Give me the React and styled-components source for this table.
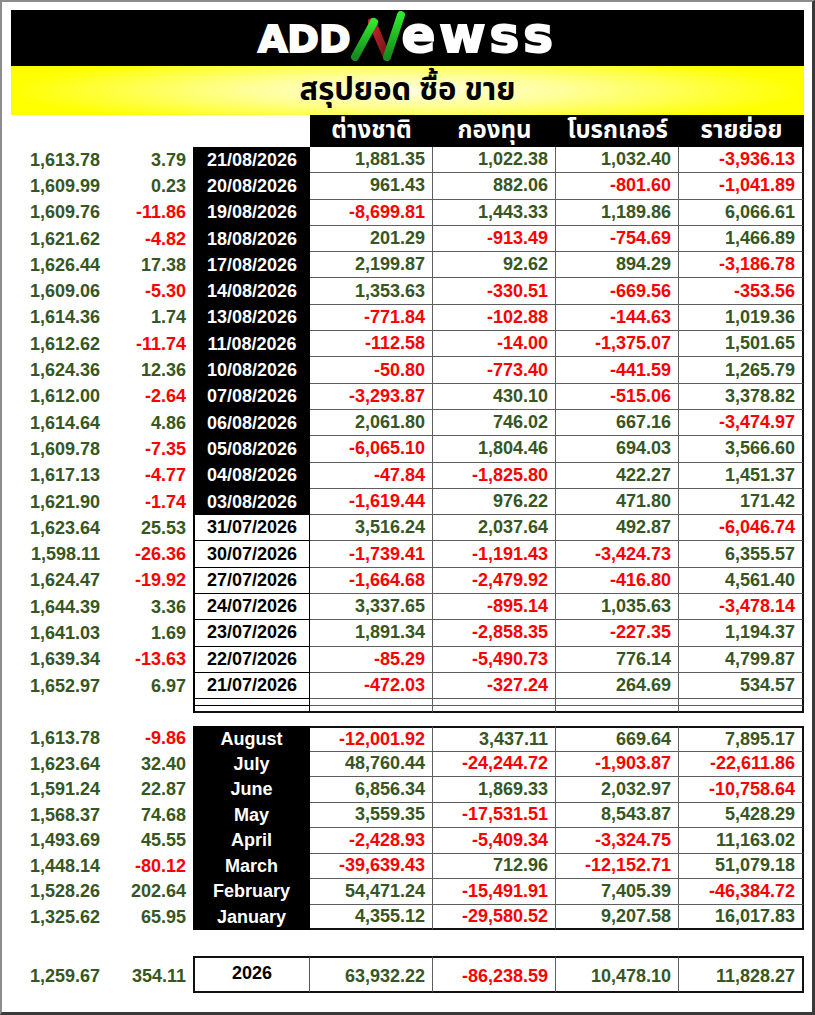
import styled, { createGlobalStyle } from 'styled-components';

const GlobalStyle = createGlobalStyle`
  html, body {
    margin: 0;
    padding: 0;
    background: #fff;
  }
  body {
    font-family: 'Liberation Sans', Arial, sans-serif;
  }
`;

const COLS = '94px 88px 117px 123px 123px 123px 125px';
const THAI = "'Noto Sans Thai', 'Noto Sans', 'DejaVu Sans', sans-serif";

const daily = [
  ['1,613.78', '3.79', '21/08/2026', '1,881.35', '1,022.38', '1,032.40', '-3,936.13'],
  ['1,609.99', '0.23', '20/08/2026', '961.43', '882.06', '-801.60', '-1,041.89'],
  ['1,609.76', '-11.86', '19/08/2026', '-8,699.81', '1,443.33', '1,189.86', '6,066.61'],
  ['1,621.62', '-4.82', '18/08/2026', '201.29', '-913.49', '-754.69', '1,466.89'],
  ['1,626.44', '17.38', '17/08/2026', '2,199.87', '92.62', '894.29', '-3,186.78'],
  ['1,609.06', '-5.30', '14/08/2026', '1,353.63', '-330.51', '-669.56', '-353.56'],
  ['1,614.36', '1.74', '13/08/2026', '-771.84', '-102.88', '-144.63', '1,019.36'],
  ['1,612.62', '-11.74', '11/08/2026', '-112.58', '-14.00', '-1,375.07', '1,501.65'],
  ['1,624.36', '12.36', '10/08/2026', '-50.80', '-773.40', '-441.59', '1,265.79'],
  ['1,612.00', '-2.64', '07/08/2026', '-3,293.87', '430.10', '-515.06', '3,378.82'],
  ['1,614.64', '4.86', '06/08/2026', '2,061.80', '746.02', '667.16', '-3,474.97'],
  ['1,609.78', '-7.35', '05/08/2026', '-6,065.10', '1,804.46', '694.03', '3,566.60'],
  ['1,617.13', '-4.77', '04/08/2026', '-47.84', '-1,825.80', '422.27', '1,451.37'],
  ['1,621.90', '-1.74', '03/08/2026', '-1,619.44', '976.22', '471.80', '171.42'],
  ['1,623.64', '25.53', '31/07/2026', '3,516.24', '2,037.64', '492.87', '-6,046.74'],
  ['1,598.11', '-26.36', '30/07/2026', '-1,739.41', '-1,191.43', '-3,424.73', '6,355.57'],
  ['1,624.47', '-19.92', '27/07/2026', '-1,664.68', '-2,479.92', '-416.80', '4,561.40'],
  ['1,644.39', '3.36', '24/07/2026', '3,337.65', '-895.14', '1,035.63', '-3,478.14'],
  ['1,641.03', '1.69', '23/07/2026', '1,891.34', '-2,858.35', '-227.35', '1,194.37'],
  ['1,639.34', '-13.63', '22/07/2026', '-85.29', '-5,490.73', '776.14', '4,799.87'],
  ['1,652.97', '6.97', '21/07/2026', '-472.03', '-327.24', '264.69', '534.57'],
];

const monthly = [
  ['1,613.78', '-9.86', 'August', '-12,001.92', '3,437.11', '669.64', '7,895.17'],
  ['1,623.64', '32.40', 'July', '48,760.44', '-24,244.72', '-1,903.87', '-22,611.86'],
  ['1,591.24', '22.87', 'June', '6,856.34', '1,869.33', '2,032.97', '-10,758.64'],
  ['1,568.37', '74.68', 'May', '3,559.35', '-17,531.51', '8,543.87', '5,428.29'],
  ['1,493.69', '45.55', 'April', '-2,428.93', '-5,409.34', '-3,324.75', '11,163.02'],
  ['1,448.14', '-80.12', 'March', '-39,639.43', '712.96', '-12,152.71', '51,079.18'],
  ['1,528.26', '202.64', 'February', '54,471.24', '-15,491.91', '7,405.39', '-46,384.72'],
  ['1,325.62', '65.95', 'January', '4,355.12', '-29,580.52', '9,207.58', '16,017.83'],
];

const yearly = ['1,259.67', '354.11', '2026', '63,932.22', '-86,238.59', '10,478.10', '11,828.27'];

const heads = ['ต่างชาติ', 'กองทุน', 'โบรกเกอร์', 'รายย่อย'];

const isNeg = (v) => v.startsWith('-');

// the "N" of the logo: two green strokes joined by a red diagonal
const LogoN = () => (
  <NMark width='56' height='50' viewBox='0 0 56 50'>
    <defs>
      <linearGradient id='greenBar' x1='0' y1='0' x2='0' y2='1'>
        <stop offset='0' stopColor='#2ee82e' />
        <stop offset='1' stopColor='#168a1c' />
      </linearGradient>
      <linearGradient id='redBar' x1='0' y1='0' x2='1' y2='1'>
        <stop offset='0' stopColor='#c8262c' />
        <stop offset='1' stopColor='#6e1416' />
      </linearGradient>
    </defs>
    <line x1='23' y1='11' x2='38' y2='46' stroke='url(#redBar)' strokeWidth='8' strokeLinecap='round' />
    <line x1='6' y1='46' x2='25' y2='11' stroke='url(#greenBar)' strokeWidth='8' strokeLinecap='round' />
    <line x1='38' y1='46' x2='52' y2='4' stroke='url(#greenBar)' strokeWidth='8' strokeLinecap='round' />
  </NMark>
);

const App = () => {
  return (
    <>
      <GlobalStyle />
      <Frame>
        <Header>
          <LogoCaps>ADD</LogoCaps>
          <LogoN />
          <LogoSmall>ewss</LogoSmall>
        </Header>
        <TitleBand>
          <h1>สรุปยอด ซื้อ ขาย</h1>
        </TitleBand>

        <Row $h={32}>
          <Blank />
          <Blank />
          <Blank />
          {heads.map((h) => (
            <HeadCell key={h}>{h}</HeadCell>
          ))}
        </Row>

        {daily.map((r, idx) => (
          <Row key={r[2]} $h={26.3}>
            <SideCell $pad={5}>{r[0]}</SideCell>
            <SideCell $pad={7} $neg={isNeg(r[1])}>
              {r[1]}
            </SideCell>
            <DateCell $dark={idx < 14}>{r[2]}</DateCell>
            {r.slice(3).map((v, i) => (
              <ValueCell key={i} $neg={isNeg(v)} $edge={i === 3}>
                {v}
              </ValueCell>
            ))}
          </Row>
        ))}

        {[0, 1].map((k) => (
          <Row key={k} $h={7}>
            <Blank />
            <Blank />
            <DateCell $bottom={k === 1 ? '2px solid #111' : undefined} />
            {[0, 1, 2, 3].map((i) => (
              <ValueCell key={i} $edge={i === 3} $bottom={k === 1 ? '2px solid #111' : undefined} />
            ))}
          </Row>
        ))}

        <Gap $h={13} />

        {monthly.map((r, idx) => (
          <Row key={r[2]} $h={25.5}>
            <SideCell $pad={5}>{r[0]}</SideCell>
            <SideCell $pad={7} $neg={isNeg(r[1])}>
              {r[1]}
            </SideCell>
            <MonthCell $top={idx === 0}>{r[2]}</MonthCell>
            {r.slice(3).map((v, i) => (
              <ValueCell
                key={i}
                $neg={isNeg(v)}
                $edge={i === 3}
                $top={idx === 0}
                $bottom={idx === monthly.length - 1 ? '2px solid #111' : undefined}
              >
                {v}
              </ValueCell>
            ))}
          </Row>
        ))}

        <Gap $h={26} />

        <Row $h={37}>
          <SideCell $pad={5} $low>
            {yearly[0]}
          </SideCell>
          <SideCell $pad={7} $low $neg={isNeg(yearly[1])}>
            {yearly[1]}
          </SideCell>
          <YearCell>{yearly[2]}</YearCell>
          {yearly.slice(3).map((v, i) => (
            <ValueCell key={i} $neg={isNeg(v)} $edge={i === 3} $top $low $bottom='2px solid #111'>
              {v}
            </ValueCell>
          ))}
        </Row>
      </Frame>
    </>
  );
};

export default App;

const Frame = styled.div`
  box-sizing: border-box;
  width: 815px;
  height: 1015px;
  padding: 8px 0 0 9px;
  border-top: 2px solid #8c8c8c;
  border-left: 2px solid #8c8c8c;
  border-right: 3px solid #3a3a3a;
  border-bottom: 3px solid #3a3a3a;
  background: #fff;
  overflow: hidden;
`;

const Header = styled.div`
  box-sizing: border-box;
  width: 793px;
  height: 56px;
  background: #000;
  display: flex;
  align-items: baseline;
  justify-content: center;
  color: #fff;
  font-family: 'DejaVu Sans', 'Liberation Sans', sans-serif;
  font-weight: 700;
`;

const LogoCaps = styled.span`
  font-size: 38px;
  line-height: 1;
  -webkit-text-stroke: 2px #fff;
`;

const LogoSmall = styled.span`
  margin-top: 3px;
  margin-left: -4px;
  font-size: 50px;
  line-height: 0.9;
  letter-spacing: 4px;
  -webkit-text-stroke: 2px #fff;
`;

const NMark = styled.svg`
  align-self: flex-start;
  margin: 1px 0 0 -1px;
  flex-shrink: 0;
`;

const TitleBand = styled.div`
  width: 793px;
  height: 49px;
  display: flex;
  align-items: center;
  justify-content: center;
  background: radial-gradient(ellipse 50% 75% at 50% 50%, #ffffe0 0%, #ffff9a 40%, #ffff00 100%);

  & h1 {
    margin: 0;
    font-family: ${THAI};
    font-size: 31px;
    font-weight: 700;
    line-height: 1;
    color: #000;
  }
`;

const Row = styled.div`
  display: grid;
  grid-template-columns: ${COLS};
  width: 793px;
  height: ${(p) => p.$h}px;
  font-size: 18px;
  font-weight: 700;
`;

const Gap = styled.div`
  height: ${(p) => p.$h}px;
`;

const Blank = styled.div`
  background: #fff;
`;

const HeadCell = styled.div`
  display: flex;
  align-items: center;
  justify-content: center;
  background: #000;
  color: #fff;
  font-family: ${THAI};
  font-size: 24px;
  font-weight: 700;
  line-height: 1;
`;

const SideCell = styled.div`
  display: flex;
  align-items: ${(p) => (p.$low ? 'flex-end' : 'center')};
  justify-content: flex-end;
  padding: ${(p) => (p.$low ? '0 0 6px' : '0')};
  padding-right: ${(p) => p.$pad}px;
  color: ${(p) => (p.$neg ? '#ff0000' : '#375623')};
`;

const DateCell = styled.div`
  box-sizing: border-box;
  display: flex;
  align-items: center;
  justify-content: center;
  background: ${(p) => (p.$dark ? '#000' : '#fff')};
  color: ${(p) => (p.$dark ? '#fff' : '#000')};
  border-left: 2px solid #000;
  border-right: 1px solid #000;
  border-bottom: ${(p) => p.$bottom || (p.$dark ? 'none' : '1px solid #000')};
`;

const MonthCell = styled.div`
  box-sizing: border-box;
  display: flex;
  align-items: center;
  justify-content: center;
  background: #000;
  color: #fff;
  border-top: ${(p) => (p.$top ? '2px solid #000' : 'none')};
`;

const YearCell = styled.div`
  box-sizing: border-box;
  display: flex;
  align-items: center;
  justify-content: center;
  padding-bottom: 3px;
  background: #fff;
  color: #000;
  border: 2px solid #111;
  border-right: 1px solid #555;
`;

const ValueCell = styled.div`
  box-sizing: border-box;
  display: flex;
  align-items: ${(p) => (p.$low ? 'flex-end' : 'center')};
  justify-content: flex-end;
  padding: ${(p) => (p.$low ? '0 7px 4px 0' : '0 7px 0 0')};
  color: ${(p) => (p.$neg ? '#ff0000' : '#375623')};
  background: #fff;
  border-top: ${(p) => (p.$top ? '2px solid #111' : 'none')};
  border-right: ${(p) => (p.$edge ? '2px solid #111' : '1px solid #5e5e5e')};
  border-bottom: ${(p) => p.$bottom || '1px solid #5e5e5e'};
`;
